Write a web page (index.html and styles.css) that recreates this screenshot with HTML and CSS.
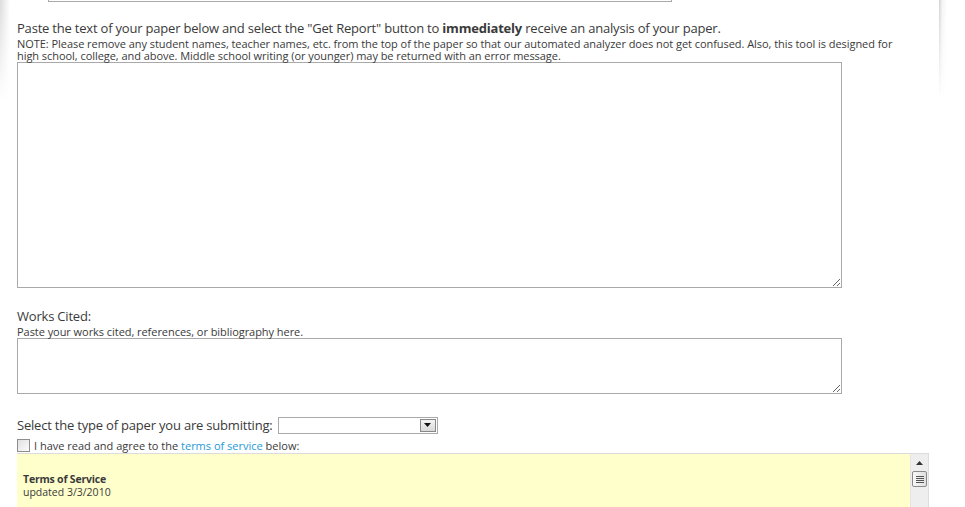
FILE: index.html
```html
<!DOCTYPE html>
<html>
<head>
<meta charset="utf-8">
<link rel="stylesheet" href="styles.css">
</head>
<body>
<div class="page">
  <div class="content">
    <div class="topbox"></div>
    <p class="lead">Paste the text of your paper below and select the "Get Report" button to <b>immediately</b> receive an analysis of your paper.</p>
    <p class="note first">NOTE: Please remove any student names, teacher names, etc. from the top of the paper so that our automated analyzer does not get confused. Also, this tool is designed for high school, college, and above. Middle school writing (or younger) may be returned with an error message.</p>
    <textarea class="paper"></textarea>
    <p class="lead works">Works Cited:</p>
    <p class="note first">Paste your works cited, references, or bibliography here.</p>
    <textarea class="cited"></textarea>
    <div class="typerow">
      <span class="lead">Select the type of paper you are submitting:</span>
      <span class="select"><span class="dd"><svg width="7" height="4" viewBox="0 0 7 4"><path d="M0 0H7L3.5 4Z" fill="#111"/></svg></span></span>
    </div>
    <label class="agree"><span class="cb"></span><span>I have read and agree to the <a href="#">terms of service</a> below:</span></label>
    <div class="tos">
      <div class="tos-text">
        <b>Terms of Service</b><br>updated 3/3/2010
      </div>
      <div class="sb">
        <svg class="up" width="7" height="4" viewBox="0 0 7 4"><path d="M0 4H7L3.5 0Z" fill="#333"/></svg>
        <div class="thumb"><i></i><i></i><i></i><i></i></div>
      </div>
    </div>
  </div>
</div>
</body>
</html>
```
FILE: styles.css
```css
html, body { margin: 0; padding: 0; background: #fff; }
body { font-family: "Open Sans", "Noto Sans", sans-serif; color: #3a3a3a; overflow: hidden; }
.page {
  width: 947px;
  height: 507px;
  background:
    linear-gradient(to bottom, rgba(255,255,255,0) 0, #fff 100px) 0 0 / 100% 100px no-repeat,
    linear-gradient(to right, #dcdcdc, #fff) 0 0 / 10px 100px no-repeat,
    linear-gradient(to right, #d0d0d0, #f4f4f4 3px, #fff) 939px 0 / 8px 100px no-repeat,
    #fff;
}
.content { padding-left: 17px; }
.topbox { margin-left: 31px; width: 622px; height: 1px; border: 1px solid #a9a9a9; border-top: none; }
p { margin: 0; }
.lead { font-size: 13px; line-height: 16px; letter-spacing: -0.2px; display: block; }
p.lead { margin-top: 18px; }
.note { font-size: 11px; line-height: 12px; width: 900px; letter-spacing: -0.05px; }
.note.first { margin-top: 2px; }
textarea { display: block; margin: 0; border: 1px solid #a9a9a9; padding: 0; resize: both; background: #fff; }
.paper { width: 823px; height: 224px; }
p.works { margin-top: 20px; }
.cited { width: 823px; height: 54px; }
.typerow { margin-top: 22px; display: flex; align-items: center; height: 18px; }
.typerow .lead { display: inline; margin-right: 5px; }
.select { width: 157px; height: 15px; border: 1px solid #a9a9a9; display: flex; justify-content: flex-end; align-items: center; padding-right: 1px; }
.dd { width: 16px; height: 13px; border: 1px solid #888; box-sizing: border-box; background: linear-gradient(#f4f4f4, #d8d8d8); display: flex; align-items: center; justify-content: center; }
.agree { display: flex; align-items: center; margin-top: 4px; font-size: 11px; height: 14px; }
.cb { width: 11px; height: 11px; border: 1px solid #8e8e8e; background: linear-gradient(135deg, #e0e0e0, #fcfcfc); margin-right: 4px; }
.agree a { color: #1d9ad6; text-decoration: none; }
.tos { margin-top: 1px; width: 912px; height: 60px; display: flex; border-top: 1px solid #dcdcdc; }
.tos-text { flex: 1; background: #ffffcc; font-size: 10.5px; line-height: 13px; padding: 19px 6px; }
.tos-text b { letter-spacing: -0.2px; }
.sb { width: 17px; background: #eeeeee; border-left: 1px solid #e4e4e4; border-right: 1px solid #ddd; display: flex; flex-direction: column; align-items: center; }
.up { margin-top: 7px; }
.thumb { margin-top: 6px; width: 13px; height: 14px; border: 1px solid #8a8a8a; border-radius: 2px; background: linear-gradient(to right, #f8f8f8, #e0e0e0); display: flex; flex-direction: column; justify-content: center; align-items: center; gap: 1px; }
.thumb i { display: block; width: 8px; height: 1px; background: #555; }
```
